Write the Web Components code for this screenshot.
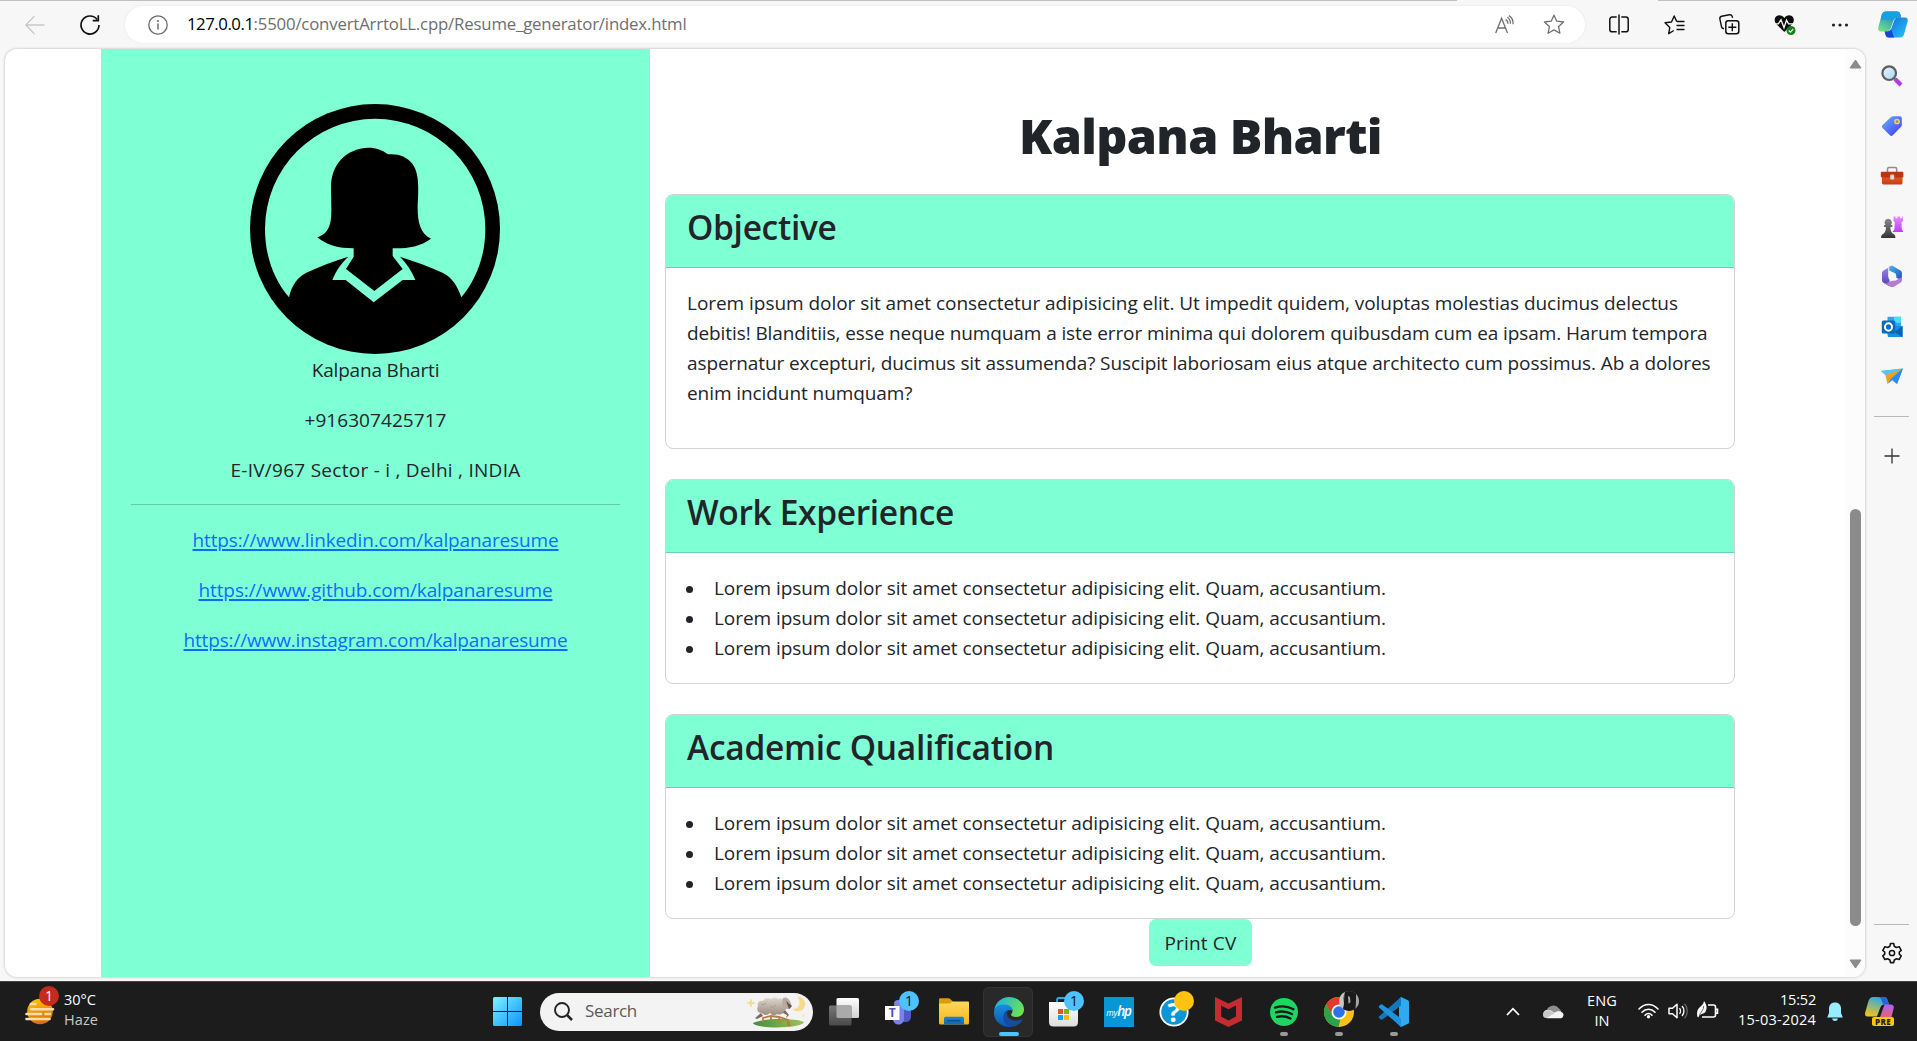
<!DOCTYPE html>
<html lang="en">
<head>
<meta charset="utf-8">
<title>Resume generator</title>
<style>
html,body{margin:0;height:100%;overflow:hidden}
body{font-family:"Open Sans","Noto Sans",sans-serif;background:#f7f7f7;color:#212529}
</style>
</head>
<body>
<desktop-shell>
  <browser-toolbar slot="toolbar"></browser-toolbar>
  <page-view slot="page">
    <profile-panel slot="aside"></profile-panel>
    <cv-card heading="Objective" w="149.5">
      <fit-text block w="991">Lorem ipsum dolor sit amet consectetur adipisicing elit. Ut impedit quidem, voluptas molestias ducimus delectus</fit-text>
      <fit-text block w="1020.5">debitis! Blanditiis, esse neque numquam a iste error minima qui dolorem quibusdam cum ea ipsam. Harum tempora</fit-text>
      <fit-text block w="1023.5">aspernatur excepturi, ducimus sit assumenda? Suscipit laboriosam eius atque architecto cum possimus. Ab a dolores</fit-text>
      <fit-text block w="225.5">enim incidunt numquam?</fit-text>
      <div style="height:20px"></div>
    </cv-card>
    <cv-card heading="Work Experience" w="267"><bullet-list></bullet-list></cv-card>
    <cv-card heading="Academic Qualification" w="367"><bullet-list></bullet-list></cv-card>
  </page-view>
  <edge-sidebar slot="side"></edge-sidebar>
  <task-bar slot="taskbar"></task-bar>
</desktop-shell>
<script>
const define = (name, html, setup) => customElements.define(name, class extends HTMLElement {
  connectedCallback() {
    if (this.shadowRoot) return;
    this.attachShadow({mode: 'open'}).innerHTML = typeof html === 'function' ? html(this) : html;
    if (setup) setup(this);
  }
});

const S = (w, h, body, vb) => `<svg width="${w}" height="${h}" viewBox="${vb || `0 0 ${w} ${h}`}" fill="none">${body}</svg>`;
const lg = (id, a, b, extra = 'x1="0" y1="0" x2="1" y2="1"') => `<linearGradient id="${id}" ${extra}><stop stop-color="${a}"/><stop offset="1" stop-color="${b}"/></linearGradient>`;

const ICONS = {
  back: S(20,20,'<path d="M19.5 10H1M9.5 1 .8 10l8.7 9" stroke="#c9c9c9" stroke-width="1.3"/>'),
  reload: S(22,22,'<path d="M18.2 5.6A9 9 0 1 0 20 11" stroke="#111" stroke-width="1.7"/><path d="M19.3 1.2v5.5h-5.6" stroke="#111" stroke-width="1.7"/>'),
  info: S(20,20,'<circle cx="10" cy="10" r="9.2" stroke="#6b6b6b" stroke-width="1.3"/><path d="M10 8.6v6" stroke="#6b6b6b" stroke-width="1.5"/><circle cx="10" cy="5.9" r="1" fill="#6b6b6b"/>'),
  read: S(20,19,'<path d="M.7 18 6.6 3.2 12.5 18M2.7 13h7.8M10.6 4.4c1.5.9 2.3 2.3 2.3 4.3M12.3 2.3c2.2 1.3 3.2 3.2 3.2 6.4M13.8.6c3 1.6 4.4 4.2 4.3 8.6" stroke="#6f6f6f" stroke-width="1.3"/>'),
  star: S(22,21,'<path d="m11 1.2 2.8 6 6.8.8-5 4.6 1.3 6.6-5.9-3.3-5.9 3.3 1.3-6.6-5-4.6 6.8-.8z" stroke="#6f6f6f" stroke-width="1.3" stroke-linejoin="round"/>'),
  split: S(20,21,'<path d="M7.7 3H3.2A2.4 2.4 0 0 0 .8 5.4v10a2.4 2.4 0 0 0 2.4 2.4h4.5M12.3 3h4.5a2.4 2.4 0 0 1 2.4 2.4v10a2.4 2.4 0 0 1-2.4 2.4h-4.5" stroke="#111" stroke-width="1.5"/><path d="M10 .5v20" stroke="#111" stroke-width="1.5"/>'),
  favs: S(21,20,'<path d="M9.8 15.5 4.7 18.7l1.1-6.3L1 7.8l6.5-.8L10.2 1l2.6 5.6M13 6.5h7.5M12.5 10.5h8M12.5 14.5h8" stroke="#111" stroke-width="1.4" stroke-linejoin="round"/>'),
  collections: S(21,21,'<path d="M5 14.8C3.5 14.7 2.7 14 2.5 12.7L.9 5.2C.6 3.7 1.3 2.6 2.7 2.3l7.7-1.5c1.5-.2 2.5.5 2.9 1.8l.3 1.3" stroke="#111" stroke-width="1.4"/><rect x="6.8" y="6.8" width="13" height="13" rx="2.5" stroke="#111" stroke-width="1.5"/><path d="M13.3 9.3v8M9.3 13.3h8" stroke="#111" stroke-width="1.4"/>'),
  heart: S(22,21,'<path d="M10.3 18 1.8 9.6C-.5 6.3.7 1.5 5.2 1.2c2.3 0 3.8 1 5.1 2.8C11.6 2.2 13 1.2 15.3 1.2c4.5.3 5.7 5.1 3.4 8.4z" fill="#0c0c0c"/><path d="M0 9.8h4.4L7 5.7l3 8 2.5-7.5 2 3.6h6" stroke="#f7f7f7" stroke-width="1.3"/><circle cx="17" cy="16.5" r="4.5" fill="#15811a"/><path d="m14.8 16.5 1.6 1.6 2.8-3" stroke="#fff" stroke-width="1.1"/>'),
  dots: S(18,6,'<g fill="#222"><circle cx="2.5" cy="3" r="1.6"/><circle cx="9" cy="3" r="1.6"/><circle cx="15.5" cy="3" r="1.6"/></g>'),
  copilot: S(30,27,`<defs>${lg('a','#1177c9','#6fdf8a','x1=".8" y1="0" x2=".2" y2="1"')}${lg('b','#1568d8','#26c4fb')}</defs><path d="M8 .5h11c2 0 2.800 1.100 3.300 2.800l1 3.200h-3.500c-2.600 0-3.700 1.200-4.500 3.400l-2.600 7.600c-.7 2-1.900 2.900-3.900 2.900H2.700C.5 20.400-.3 18.700.3 16.300L3.600 4.200C4.300 1.700 5.600.5 8 .5z" fill="url(#a)"/><path d="M8 .5h11c2 0 2.800 1.100 3.300 2.800l1 3.200h-3.500c-2 0-3.300.8-4 2.300H2.700L3.600 4.200C4.300 1.700 5.600.5 8 .5z" fill="#16a0dc"/><path d="M21.800 26.500h-11c-2 0-2.700-1.100-3.200-2.800l-1-3.300h2.800c2 0 3.200-.9 3.900-2.900l2.700-7.600c.8-2.200 1.900-3.400 4.500-3.400h6.700c2.200 0 3.100 1.700 2.400 4.100l-3.400 12.100c-.7 2.600-2 3.800-4.400 3.800z" fill="url(#b)"/><path d="M6.600 20.400h2.800c1.600 0 2.900-.6 3.700-2.200l3 8.300h-5.300c-2 0-2.700-1.100-3.200-2.800z" fill="#1747cf"/>`),
  search3d: S(22,22,`<defs>${lg('a','#e8f7ff','#a8d5f5')}</defs><path d="m14 14 6 6" stroke="#b834f0" stroke-width="4.2"/><path d="m12.5 12.5 3 3" stroke="#777" stroke-width="2"/><circle cx="8.2" cy="8.2" r="6.8" fill="url(#a)" stroke="#5d5f60" stroke-width="2.2"/>`),
  tag: S(22,22,`<defs>${lg('a','#6fb4ff','#3a37f5')}</defs><path d="M12.3 1.2h6.200c1.700 0 2.300.8 2.300 2.300v6.200c0 1-.3 1.600-1 2.300l-8 8.200c-1 1-1.900 1-2.900 0l-7.300-7.300c-1-1-1-1.900 0-2.900l8.400-8c.7-.6 1.300-.8 2.300-.8z" fill="url(#a)"/><circle cx="16" cy="6.5" r="2.1" fill="#7390c8" stroke="#ffd52e" stroke-width="1.5"/>`),
  toolbox: S(24,20,`<defs>${lg('a','#ef6c26','#c63d12','x1="0" y1="0" x2="0" y2="1"')}</defs><path d="M7.5 6V3.200c0-1 .6-1.600 1.600-1.600h6c1 0 1.600.6 1.600 1.600V6" stroke="#8a8d90" stroke-width="1.5"/><rect x="2" y="6" width="20.5" height="12.5" rx="1.5" fill="url(#a)"/><path d="M2.300 5.700h19.900c.8 0 1.200.5 1.200 1.200v3.400c0 .8-.5 1.200-1.200 1.200H2c-.8 0-1.200-.5-1.200-1.200V6.900c0-.7.5-1.200 1.500-1.200z" fill="#b8370f"/><rect x="10.2" y="8.5" width="4" height="5" rx="1" fill="#d5dbde"/>`),
  chess: S(24,24,`<defs>${lg('a','#c13af6','#e58cff','x1="0" y1="1" x2="0" y2="0"')}${lg('b','#8b8b8b','#353535','x1="0" y1="0" x2="0" y2="1"')}</defs><path d="M13.5 1.500h2v1.800h2V1.500h2.600v1.800h2V1.500H23V6l-1.500 1.200.3 7 1.600 2.800H12.600l1.800-2.800.4-7L13.500 6z" fill="url(#a)"/><path d="M8.200 3.700a3.700 3.700 0 0 1 2.700 6.200h1.500v2h-2c0 3 .7 4.700 2.200 6.500 2 .8 2.800 2.200 2.800 4.600H1c0-2.400.9-3.800 2.800-4.600C5.300 16.600 6 14.900 6 11.900H4v-2h1.500a3.700 3.700 0 0 1 2.700-6.200z" fill="url(#b)"/>`),
  m365: S(22,23,`<defs>${lg('a','#43b9f1','#2846c2')}${lg('b','#a98ae8','#4b3fb5','x1="0" y1="0" x2="0" y2="1"')}</defs><path d="m11 .6 8.400 4.800c1 .6 1.500 1.300 1.500 2.500v7.500l-6-3-.7-3.800-6-3V3.500c0-1.300.6-2 2.800-2.900z" fill="url(#a)"/><path d="M11 .6 2.600 5.400C1.500 6 1 6.800 1 7.900v7.400c0 1.200.5 2 1.500 2.500l5.400 3.100 1-8-1.700-2.500V3.500C7.200 2 8.500 1.200 11 .6z" fill="url(#b)"/><path d="m2.500 17.800 6.800 4c1.200.6 2.300.6 3.400 0l6.700-4c1-.6 1.500-1.300 1.500-2.500V12l-6.200 3.500-3.700.3-6 2.700z" fill="#b47bd2"/><circle cx="11.300" cy="11.500" r="4" fill="#f7f7f7"/>`),
  outlook: S(22,22,'<path d="M6.500.8H20v11H6.500z" fill="#28a8ea"/><path d="M13 .8h7v6h-7z" fill="#50d9ff"/><path d="M5 10h16.500v11H7z" fill="#1490df"/><path d="m21.500 10-8 6 8 5z" fill="#0a62b0"/><rect x=".8" y="4.5" width="13.5" height="13" rx="1.5" fill="#0869bd"/><ellipse cx="7.500" cy="11" rx="3.500" ry="3.800" stroke="#fff" stroke-width="2"/>'),
  plane: S(24,20,'<path d="m1 4 22-2.500-5.800 15.300-5-4-3.700 3.700-1-7.200z" fill="#2e9bf2"/><path d="m1 4 22-2.500L7.200 9.700z" fill="#56c5f7"/><path d="m5.500 8.200 17-6.500L11 11.500l-3.500 5.800z" fill="#eda01c"/><path d="m8 16.500 4.200-4.800L22.800 1.600 17 17l-5-4z" fill="#2c8bed"/>'),
  plus: S(16,16,'<path d="M8 .5v15M.5 8h15" stroke="#333" stroke-width="1.3"/>'),
  gear: S(22,22,'<path d="m9.500 1.500-.6 2.700-2.200 1.300-2.800-.8L1.800 8.400 3.700 10v2.200l-1.900 1.700 2.100 3.600 2.700-.8 2.300 1.300.6 2.600h3.200l.6-2.600 2.200-1.300 2.700.8 2-3.600-1.900-1.700V10l1.900-1.600-2-3.700-2.800.8-2.200-1.300-.5-2.700z" stroke="#151515" stroke-width="1.6" stroke-linejoin="round"/><circle cx="11" cy="11" r="2.6" stroke="#151515" stroke-width="1.5"/>'),
  avatar: S(250,250,'<circle cx="435" cy="417" r="375" fill="#000"/><path d="M177 622C128 564 105 492 105 417a330.500 330.500 0 0 1 661 0c0 75-24 147-72 205-12-34-26-58-55-73-40-20-85-34-129-49 20 20 35 43 46 70h-38l-87 67-84-67h-40c11-27 26-50 48-70-44 13-85 29-126 48-28 14-44 39-52 74z" fill="#7fffd4"/><path d="M371 475v25l-23 37 85 66 85-66-30-39v-23c44 1 82-5 115-29-34-16-41-56-40-100 3-58 4-98-16-125-18-22-43-31-73-28-16-13-36-20-58-20-71 3-114 52-113 122 0 35 3 73-1 97-4 25-16 42-40 50 28 24 64 33 109 33z" fill="#000"/>','60 42 750 750'),
  haze: S(34,34,`<defs>${lg('a','#ffc400','#e0650c','x1=".3" y1="0" x2=".6" y2="1"')}</defs><circle cx="15" cy="17.500" r="12.800" fill="url(#a)"/><g stroke="#f6dfb0" stroke-width="2.600" stroke-linecap="round"><path d="M6 10h4.500M6 15.200h22M1.500 20h14.500M20.500 20h4.500M1.500 25h23"/></g>`),
  windows: S(29,29,`<defs><linearGradient id="a" gradientUnits="userSpaceOnUse" x1="0" y1="0" x2="29" y2="29"><stop stop-color="#7df3ff"/><stop offset="1" stop-color="#0a93fb"/></linearGradient></defs><path d="M1.500 0H14v14H0V1.500Q0 0 1.500 0zM15 0h12.500Q29 0 29 1.500V14H15zM0 15h14v14H1.500Q0 29 0 27.500zM15 15h14v12.500q0 1.500-1.500 1.500H15z" fill="url(#a)"/>`),
  mag: S(19,19,'<circle cx="8" cy="8" r="7" stroke="#222" stroke-width="1.9"/><path d="m13 13 5 5" stroke="#222" stroke-width="2.5"/>'),
  sheep: S(58,32,`<defs>${lg('g','#3f8f3c','#a2c257','x1="0" y1="0" x2="1" y2="0"')}${lg('w','#dfd8cc','#9b8c80','x1="0" y1="0" x2="0" y2="1"')}</defs><path d="M5 27c8-4.500 40-5.500 51-1-2 7-49 7-51 1z" fill="url(#g)"/><path d="M15 26v-4l8-2 8 1 9 3 2 6M23 20v4m8-3 1 6m8-3v6" stroke="#b97b3f" stroke-width="1.8"/><path d="m13 17-6 5 2 1 6-3zM33 16l6 3-1 3 3-3-4-5z" fill="#7c695d"/><path d="M10 10c-2-4 3-6 5-5 1-3 6-4 8-2 2-2 6-2 7 0 3-2 6 0 6 2l4 5c-1 3-3 4-4 5-1 4-5 4-7 3-2 2-6 1-7-1-3 3-7 2-8 0-4 0-6-3-4-7z" fill="url(#w)"/><path d="M13 8q3 2 5-1m4 3q3 3 6-1m-9 5q4 3 6 0" stroke="#a99b8e" stroke-width="1"/><path d="M35 2c4-2 7 2 8 6 1 3 0 5-3 5-4 0-6-3-6-6z" fill="#b9aaa0"/><path d="m38 5 6 5-3 3z" fill="#665750"/><path d="M50 1a7 7 0 1 1-5 12c6 1 9-7 5-12zM3 3l1 3 3 1-3 1-1 3-1-3-3-1 3-1zM54 18l3 3m0-3-3 3" fill="#f7d989" stroke="#f7d989" stroke-width=".6"/>`),
  taskview: S(30,28,`<defs>${lg('a','#fff','#d3d3d3','x1="0" y1="0" x2="0" y2="1"')}${lg('b','#777','#4a4a4a','x1="0" y1="0" x2="0" y2="1"')}</defs><rect x="7.500" width="22.500" height="20" rx="1.500" fill="url(#a)"/><rect y="7.500" width="22.500" height="20" rx="1.500" fill="url(#b)"/><path d="M7.500 7.500h15V20H9q-1.500 0-1.500-1.500z" fill="#aaa"/>`),
  teams: S(28,26,'<circle cx="13" cy="5" r="4" fill="#7b83eb"/><path d="M15 10h11v7c0 4-2 6-6 6h-5z" fill="#5059c9"/><path d="M8 8h11v11c0 4-2 6.500-5.500 6.500-3 0-5-2-5.500-5z" fill="#7b83eb"/><rect x="0" y="7" width="14.500" height="14" fill="#fff"/><text x="7.300" y="18.200" text-anchor="middle" font-family="Open Sans" font-weight="700" font-size="12" fill="#4b53bc">T</text>'),
  folder: S(30,27,`<defs>${lg('a','#ffd65c','#f5b61b','x1="0" y1="0" x2="0" y2="1"')}${lg('b','#1386d8','#1467b5','x1="0" y1="0" x2="0" y2="1"')}</defs><path d="M0 1.500Q0 .3 1.300.3h8.200q1 0 1.700.7l3 3V9H0z" fill="#dc9c0b"/><path d="M0 5.500h9.500c1.500 0 2-.2 3-1.200l.8-.8H29q1 0 1 1V25q0 1.500-1.500 1.500h-27Q0 26.500 0 25z" fill="url(#a)"/><path d="M5 26.500v-6q0-1.700 1.700-1.700h16.600q1.700 0 1.700 1.700v6z" fill="url(#b)"/><path d="M8.500 22.700h13" stroke="#0b4d90" stroke-width="1.500"/>`),
  edge: S(30,30,`<defs>${lg('a','#1eaee8','#6be64f','x1="0" y1=".2" x2="1" y2=".6"')}${lg('b','#1690dd','#0d55b0','x1="0" y1="0" x2="0" y2="1"')}</defs><path d="M.3 13C1.300 5.500 7.500 0 15 0c8.500 0 15 5.500 15 12.500 0 4.500-3.300 7.500-7.700 7.500-3.500 0-5.300-1-5.300-2.200 0-.8 1.500-1.500 1.500-4C18.500 10.500 15 8 10.500 8 5.500 8 1.500 10.500.3 13z" fill="url(#a)"/><path d="M.3 13C1.500 9.500 5.500 7.500 10 7.500c5 0 8.500 2.700 8.500 6.100-5-2-8.500 1.400-8.500 6 0 5.400 4.500 10 9.500 9.900C9 32-.8 24.500 0 15z" fill="url(#b)"/><path d="M15.500 12.900c-4 1.100-6.300 3.900-6.300 7.600 0 4.500 4 9 9.800 9 3.500-.3 7.300-2.800 9.400-6.500.4-.8-.2-1.200-.9-.8C20.800 25.800 13 22 13 16.800c0-1.600.8-3 2.500-3.900z" fill="#164b9d"/>`),
  store: S(29,30,`<defs>${lg('a','#fff','#dedede','x1="0" y1="0" x2="0" y2="1"')}</defs><path d="M8 6V3q0-2 2-2h9q2 0 2 2v3" stroke="#30a8ea" stroke-width="1.800"/><path d="M0 5h29v20q0 4.500-4.500 4.500h-20Q0 29.500 0 25z" fill="url(#a)"/><path fill="#e8502b" d="M9 12h5v5H9z"/><path fill="#7cb518" d="M15 12h5v5h-5z"/><path fill="#10a3ee" d="M9 18h5v5H9z"/><path fill="#fdb813" d="M15 18h5v5h-5z"/>`),
  help: S(30,30,'<circle cx="15" cy="15" r="13.700" fill="#0b96d6" stroke="#fff" stroke-width="1.800"/><text x="15" y="24.500" text-anchor="middle" font-family="Open Sans" font-weight="700" font-size="27" fill="#fff">?</text>'),
  mcafee: S(27,30,'<path d="m0 0 13.500 6.500L27 0v23.500L13.500 30 0 23.500z" fill="#c52b2f"/><path d="m6 8.500 7.500 3.700 7.500-3.700v11l-7.500 4-7.500-4z" fill="#1c1c1c"/>'),
  spotify: S(28,28,'<circle cx="14" cy="14" r="14" fill="#1ed760"/><path d="M5 9.700c6-2 13-1.400 18.500 1.500M6 14.400c5-1.500 11-.9 16 1.700M7 18.900c4.500-1.200 9-.7 13.500 1.600" stroke="#1b1b1b" stroke-width="2.300" stroke-linecap="round"/>'),
  chrome: S(30,30,'<circle cx="15" cy="15" r="15" fill="#fbc116"/><path d="M15 0a15 15 0 0 1 13 7.500H15L8.500 18.700 2 7.500A15 15 0 0 1 15 0z" fill="#e23a2e"/><path d="M2 7.500 8.500 18.700c2 3.300 4.700 4 8 3.400L14.500 30A15 15 0 0 1 2 7.500z" fill="#2aa14b"/><circle cx="15" cy="15" r="7.500" fill="#fff"/><circle cx="15" cy="15" r="5.800" fill="#2d72e8"/>'),
  face: S(20,20,'<defs><clipPath id="c"><circle cx="10" cy="10" r="10"/></clipPath></defs><g clip-path="url(#c)"><path fill="#777" d="M0 0h20v20H0z"/><path d="M6 0h12l-2 20H4z" fill="#1a1a1a"/><path d="M0 0h6L4 7l1 6-2 7H0z" fill="#c6c6c6"/><path d="m9 5 2 1 .5 5-2 2zM17 1l3 5v9l-3 3z" fill="#a5a5a5"/></g>'),
  vscode: S(30,30,`<path d="m22 0 7 3.200q1 .5 1 1.500v20.600q0 1-1 1.500L22 30 20 28V2z" fill="#2fa9f2"/><path d="M22 0 0 19.500q-.5.7 0 1.400l1.800 1.700q.7.5 1.500 0L22 8.500z" fill="#1478be"/><path d="M22 30 0 10.500q-.5-.7 0-1.400l1.800-1.700q.7-.5 1.500 0L22 21.500z" fill="#1f93dc"/>`),
  chevron: S(14,9,'<path d="m1 8 6-6.300L13 8" stroke="#fff" stroke-width="1.800"/>'),
  cloud: S(21,14,'<path d="M3.500 9A7 7 0 0 1 16 3.500c2 1.500 2.500 3 2.500 5.500z" fill="#8e8e8e"/><path d="M4.500 13.300a4.200 4.200 0 0 1-1-8.200c4-.7 6 1.400 8 2.700 5-3.400 9-.3 9 2 0 2.300-1.500 3.500-3.500 3.500z" fill="#f3f3f3"/><path d="M0 10c0-5 4-5.500 7-4.300l4.500 2.600-8 4.700C1.200 13 0 12 0 10z" fill="#c8c8c8"/>'),
  wifi: S(21,16,'<g stroke="#fff" stroke-width="1.600" stroke-linecap="round"><path d="M1 6c5.500-6 13.500-6 19 0M4 9.200c3.800-4 9.200-4 13 0M7 12.200c2-2.200 5-2.200 7 0"/></g><circle cx="10.500" cy="13.800" r="1.700" fill="#fff"/>'),
  sound: S(21,18,'<path d="M1 6.300h3.500L9 2.200v13.600l-4.500-4.100H1z" stroke="#fff" stroke-width="1.500" stroke-linejoin="round"/><path d="M11.500 6.200c1.300 1.500 1.300 4.100 0 5.600M14 4c2.600 2.700 2.600 7.300 0 10" stroke="#fff" stroke-width="1.400"/><path d="M16.500 1.800c3.700 4.100 3.700 10.300 0 14.400" stroke="#666" stroke-width="1.300"/>'),
  battery: S(22,18,'<path d="M11 4h5.500Q18.500 4 18.500 6v8q0 2-2 2H5M19 8.200h1.500v4H19" stroke="#fff" stroke-width="1.600"/><path d="M7 0C10 4 10.500 8 8 11.500c-1.500 1.500-3.500 1-5.500 2.500L1.300 16.500.3 15.500C-.5 11 .5 8 3 6 5 4.500 6.500 3 7 0z" fill="#fff"/><path d="M6.800 5C6.500 9 4.500 10.500 2.500 13.500" stroke="#444" stroke-width=".8"/>'),
  bell: S(16,20,'<path d="M8 .5c4 0 6 2.700 6 6V11l1.800 4.500H.2L2 11V6.500c0-3.300 2-6 6-6z" fill="#99ebff"/><path d="M5 16.500h6q-.5 2.500-3 2.500t-3-2.500z" fill="#99ebff"/>'),
  copilotpre: S(30,29,`<defs>${lg('a','#26a7f2','#f8c512','x1=".6" y1="0" x2=".2" y2="1"')}${lg('b','#ad63f5','#f0605c','x1="0" y1="0" x2="0" y2="1"')}</defs><path d="M8 0h11c2 0 3 1 3.500 3l1.500 4.500h-4c-3 0-4 1.500-5 4l-3 8H2.500C.5 19.500-.5 18 .3 15L3.500 4C4.500 1 6 0 8 0z" fill="url(#a)"/><path d="M12 0h7c2 0 3 1 3.500 3L24 7.500h-6L16.500 3Q15.500 0 12 0z" fill="#2464df"/><path d="M18.500 7.500h7c2.500 0 4 1.500 3 4.500L26 22H13z" fill="url(#b)"/><path d="m12 20 4-10q1-2.500 3.500-2.500L15 20z" fill="#1c1c1c"/>`)
};

define('app-icon', el => `<style>:host{display:block;flex:none;line-height:0}svg{display:block;overflow:visible}</style>${ICONS[el.getAttribute('name')] || ''}`);

// Spaces the letters of one line so that the line takes the width given in "w".
define('fit-text', `<style>:host{display:inline-block;white-space:pre;flex:none}:host([block]){display:block}span{display:inline-block;text-decoration:inherit}</style><span><slot></slot></span>`, el => {
  const s = el.shadowRoot.querySelector('span');
  const fit = () => {
    s.style.letterSpacing = '0';
    const nat = s.getBoundingClientRect().width, n = el.textContent.length;
    if (nat) s.style.letterSpacing = ((+el.getAttribute('w') - nat) / n) + 'px';
  };
  fit();
  requestAnimationFrame(fit);
});

define('desktop-shell', `<style>
:host{display:flex;flex-direction:column;width:1917px;height:1041px;background:#f7f7f7}
.mid{display:flex;height:932px}
</style><slot name="toolbar"></slot><div class="mid"><slot name="page"></slot><slot name="side"></slot></div><slot name="taskbar"></slot>`);

define('browser-toolbar', `<style>
:host{display:flex;flex-direction:column;height:49px}
.top{display:flex;justify-content:space-between;height:1px}
.top i{background:#c0c0c0;height:1px}
.row{display:flex;align-items:center;height:47px;box-sizing:border-box;padding:0 9px 0 25px}
.pill{display:flex;align-items:center;width:1460px;height:37px;border-radius:19px;background:#fff;box-sizing:border-box;padding:0 20px 0 23px;box-shadow:0 0 3px #0001;margin:0 24px}
.url{display:flex;font-size:16.8px;color:#6e6e6e;margin-left:19px;flex:1;line-height:24px;padding-bottom:1px}
.url b{font-weight:400;color:#000}
</style><div class="top"><i style="width:1457px"></i><i style="width:259px"></i></div>
<div class="row"><app-icon name="back"></app-icon><app-icon name="reload" style="margin-left:34px"></app-icon>
<div class="pill"><app-icon name="info"></app-icon><div class="url"><b><fit-text w="66.5">127.0.0.1</fit-text></b><fit-text w="433">:5500/convertArrtoLL.cpp/Resume_generator/index.html</fit-text></div>
<app-icon name="read"></app-icon><app-icon name="star" style="margin-left:28px"></app-icon></div>
<app-icon name="split"></app-icon><app-icon name="favs" style="margin-left:35px"></app-icon><app-icon name="collections" style="margin-left:34px"></app-icon><app-icon name="heart" style="margin-left:34px"></app-icon><app-icon name="dots" style="margin-left:35px"></app-icon><app-icon name="copilot" style="margin-left:29px"></app-icon></div>`);

define('page-view', `<style>
:host{display:flex;box-sizing:border-box;width:1860px;height:928px;margin-left:5px;background:#fff;border-radius:12px;overflow:hidden;box-shadow:0 0 3px #0004;flex:none}
.left{width:96px}
main{display:flex;flex-direction:column;width:1070px;margin-left:15px}
h1{margin:0;padding-top:56px;height:89px;font-size:48.5px;line-height:60px;font-weight:800;display:flex;justify-content:center;padding-left:1px}
::slotted(cv-card){margin-bottom:30px}
::slotted(cv-card:last-of-type){margin-bottom:0}
button{align-self:center;border:0;border-radius:7px;background:#7fffd4;color:#212529;font:19px/30px "Open Sans",sans-serif;width:103px;height:47px;padding:0;margin-left:1px}
.bar{margin-left:auto;width:19px;background:#fcfcfc;display:flex;flex-direction:column;align-items:center}
.bar svg{display:block;margin-top:10px}
.thumb{width:11px;height:417px;border-radius:6px;background:#8b8b8b;margin-top:440px}
.bar svg.dn{margin-top:33px}
</style><div class="left"></div><slot name="aside"></slot>
<main><h1><fit-text w="363">Kalpana Bharti</fit-text></h1><slot></slot><button><fit-text w="72">Print CV</fit-text></button></main>
<div class="bar"><svg width="13" height="10"><path d="M6.5 1 12 9H1z" fill="#8b8b8b" stroke="#8b8b8b" stroke-linejoin="round"/></svg><div class="thumb"></div><svg class="dn" width="13" height="10"><path d="M6.5 9 12 1H1z" fill="#8b8b8b" stroke="#8b8b8b" stroke-linejoin="round"/></svg></div>`);

define('profile-panel', `<style>
:host{display:flex;flex-direction:column;align-items:center;width:549px;box-sizing:border-box;padding:55px 30px 0;background:#7fffd4;font-size:19px;line-height:30px}
app-icon{margin-right:1px}
p{margin:0 0 20px;height:30px}
p:first-of-type{margin-top:1px}
hr{width:489px;height:1px;border:0;margin:-1px 0 20px;background:#68c8a9}
a{color:#0d6efd}
a fit-text{text-decoration:underline;text-decoration-thickness:1.5px;text-underline-offset:2px}
</style><app-icon name="avatar"></app-icon>
<p><fit-text w="127.5">Kalpana Bharti</fit-text></p><p><fit-text w="142">+916307425717</fit-text></p><p><fit-text w="290">E-IV/967 Sector - i , Delhi , INDIA</fit-text></p><hr>
<p><a><fit-text w="366">https://www.linkedin.com/kalpanaresume</fit-text></a></p><p><a><fit-text w="354">https://www.github.com/kalpanaresume</fit-text></a></p><p><a><fit-text w="384">https://www.instagram.com/kalpanaresume</fit-text></a></p>`);

define('cv-card', el => `<style>
:host{display:block;border:1px solid #d2d3d3;border-radius:8px;overflow:hidden;background:#fff}
header{background:#7fffd4;border-bottom:1px solid #69d2af;padding:11px 20px 0 21px;height:61px;font-size:33.5px;line-height:42px;font-weight:600}
.body{padding:20px 20px 20px 21px;font-size:19px;line-height:30px}
</style><header><fit-text w="${el.getAttribute('w')}">${el.getAttribute('heading')}</fit-text></header><div class="body"><slot></slot></div>`);

define('bullet-list', `<style>:host{display:block}div{display:flex;align-items:center;height:30px}i{width:7px;height:7px;border-radius:50%;background:#212529;margin:2px 21px 0 -1px}</style>
${'<div><i></i><fit-text w="672">Lorem ipsum dolor sit amet consectetur adipisicing elit. Quam, accusantium.</fit-text></div>'.repeat(3)}`);

define('edge-sidebar', `<style>
:host{display:flex;flex-direction:column;align-items:center;width:52px;height:932px;padding:2px 0 0 1px;box-sizing:border-box}
.c{height:50.2px;display:flex;align-items:center}
.s{width:35px;height:1px;background:#b9b9b9}
</style>${['search3d','tag','toolbox','chess','m365','outlook','plane'].map(n => `<div class="c"><app-icon name="${n}"></app-icon></div>`).join('')}
<div class="s" style="margin-top:14px"></div><app-icon name="plus" style="margin-top:31px"></app-icon><div class="s" style="margin-top:460px"></div><app-icon name="gear" style="margin-top:17px"></app-icon>`);

const task = (icon, extra = '', cls = '') => `<div class="t ${cls}">${icon ? `<app-icon name="${icon}"></app-icon>` : ''}${extra}</div>`;
define('task-bar', `<style>
:host{display:flex;align-items:center;height:60px;box-sizing:border-box;border-top:1px solid #444;background:#1c1c1c;color:#fff;padding:0 22px 0 25px;font-size:14.5px;line-height:20px}
.w{position:relative;margin-bottom:10px}
.b{position:absolute;width:20px;height:20px;border-radius:50%;background:#4cc2ff;color:#111;font-size:14px;line-height:20px;text-align:center}
.col{display:flex;flex-direction:column;flex:none;margin-bottom:3px}
.pill{display:flex;align-items:center;width:273px;height:38px;border-radius:19px;background:#f3f3f3;color:#5a5a5a;font-size:17px;box-sizing:border-box;padding:0 7px 0 14px;margin-left:18px;margin-right:3px}
.t{position:relative;width:55px;height:50px;display:flex;align-items:center;justify-content:center;flex:none}
.t .b{left:28px;top:4px}
.on::before{content:"";position:absolute;left:2px;top:0;width:50px;height:50px;border-radius:6px;background:#292929;box-shadow:inset 0 0 0 1px #343434}
.on app-icon{position:relative}
.on::after,.run::after{content:"";position:absolute;left:23.5px;top:45px;width:8px;height:4px;border-radius:2px;background:#999}
.on::after{left:17.5px;width:20px;background:#4cc2ff}
.hp{width:30px;height:30px;background:#0796d6;color:#fff;font-size:8.5px;line-height:29px;text-align:center;font-style:italic;letter-spacing:-.2px}
.hp b{font-size:13.5px;font-weight:600;letter-spacing:-1.2px}
.face{position:absolute;left:28px;top:4px}
.pre{position:absolute;left:7px;top:20px;width:22px;height:9px;border-radius:2px;background:#ffc900;color:#222;font:800 8px/9px "Open Sans",sans-serif;text-align:center;letter-spacing:.3px}
</style>
<div class="w" style="margin-top:9px"><app-icon name="haze"></app-icon><span class="b" style="left:14px;top:-8px;background:#c42b1c;color:#fff">1</span></div>
<div class="col" style="margin-left:5px"><fit-text w="32">30°C</fit-text><fit-text w="34" style="color:#c9c9c9">Haze</fit-text></div>
<app-icon name="windows" style="margin-left:auto"></app-icon>
<div class="pill"><app-icon name="mag"></app-icon><fit-text w="52" style="margin:0 0 1px 12px">Search</fit-text><app-icon name="sheep" style="margin-left:auto"></app-icon></div>
${task('taskview')}${task('teams','<span class="b">1</span>')}${task('folder')}${task('edge','','on')}${task('store','<span class="b">1</span>')}${task('','<div class="hp">my<b>hp</b></div>')}${task('help','<span class="b" style="background:#ffc20e"></span>')}${task('mcafee')}${task('spotify','','run')}${task('chrome','<app-icon class="face" name="face"></app-icon>','run')}${task('vscode','','run')}
<app-icon name="chevron" style="margin-left:85px"></app-icon><app-icon name="cloud" style="margin-left:23px"></app-icon>
<div class="col" style="margin-left:23px;align-items:center;margin-bottom:2px"><fit-text w="30">ENG</fit-text><fit-text w="15">IN</fit-text></div>
<app-icon name="wifi" style="margin:0 0 1px 21px"></app-icon><app-icon name="sound" style="margin:0 0 1px 9px"></app-icon><app-icon name="battery" style="margin:0 0 3px 8px"></app-icon>
<div class="col" style="margin-left:19px;align-items:flex-end"><fit-text w="36">15:52</fit-text><fit-text w="78">15-03-2024</fit-text></div>
<app-icon name="bell" style="margin-left:11px"></app-icon><div style="position:relative;margin-left:22px"><app-icon name="copilotpre"></app-icon><span class="pre">PRE</span></div>`);
</script>
</body>
</html>
